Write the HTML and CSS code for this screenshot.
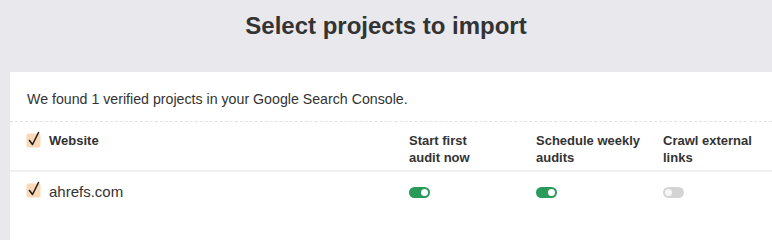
FILE: index.html
```html
<!DOCTYPE html>
<html>
<head>
<meta charset="utf-8">
<link rel="stylesheet" href="styles.css">
</head>
<body>
<header class="top">
  <h1 class="title">Select projects to import</h1>
</header>
<main class="card">
  <p class="intro">We found 1 verified projects in your Google Search Console.</p>
  <div class="row head">
    <div class="site">
      <span class="check"><svg viewBox="0 0 16 18" width="16" height="18"><rect x="0.5" y="3.5" width="14" height="14" rx="2" fill="#fbd8b6"/><path d="M3.5 10.5 L6.5 14.5 L12.5 2.5" fill="none" stroke="#222" stroke-width="1.6" stroke-linecap="round" stroke-linejoin="round"/></svg></span>
      <span class="label">Website</span>
    </div>
    <div class="col">Start first<br>audit now</div>
    <div class="col">Schedule weekly<br>audits</div>
    <div class="col">Crawl external<br>links</div>
  </div>
  <div class="row data">
    <div class="site">
      <span class="check"><svg viewBox="0 0 16 18" width="16" height="18"><rect x="0.5" y="3.5" width="14" height="14" rx="2" fill="#fbd8b6"/><path d="M3.5 10.5 L6.5 14.5 L12.5 2.5" fill="none" stroke="#222" stroke-width="1.6" stroke-linecap="round" stroke-linejoin="round"/></svg></span>
      <span class="domain">ahrefs.com</span>
    </div>
    <div class="col"><span class="toggle on"></span></div>
    <div class="col"><span class="toggle on"></span></div>
    <div class="col"><span class="toggle off"></span></div>
  </div>
</main>
</body>
</html>
```
FILE: styles.css
```css
html, body {
  margin: 0;
  padding: 0;
  background: #e9e8ed;
  font-family: "Liberation Sans", Arial, sans-serif;
  color: #333;
  overflow: hidden;
}
html { height: 100%; }
body {
  min-height: 100%;
  display: flex;
  flex-direction: column;
}
.top {
  height: 72px;
  flex: none;
  display: flex;
  justify-content: center;
}
.title {
  margin: 0;
  padding-top: 10px;
  font-size: 24px;
  line-height: 31px;
  font-weight: bold;
  color: #333;
}
.card {
  flex: 1;
  margin-left: 10px;
  background: #fff;
}
.intro {
  margin: 0;
  height: 50px;
  box-sizing: border-box;
  padding: 18px 0 0 17px;
  font-size: 14.2px;
  line-height: 18px;
  border-bottom: 1px dashed #e4e4e4;
}
.row {
  display: grid;
  grid-template-columns: 383px 127px 127px 127px;
  padding-left: 16px;
}
.head {
  height: 50px;
  box-sizing: border-box;
  padding-top: 10px;
  border-bottom: 2px solid #f0f0f0;
  font-size: 13px;
  line-height: 17px;
  font-weight: bold;
}
.site {
  display: flex;
  align-items: flex-start;
  gap: 7px;
}
.check {
  display: block;
  width: 16px;
  height: 18px;
  margin-top: -2px;
}
.check svg { display: block; }
.data {
  padding-top: 10px;
}
.domain {
  font-size: 15px;
  line-height: 18px;
  padding-top: 1px;
}
.data .col {
  padding-top: 5px;
}
.toggle {
  display: block;
  position: relative;
  width: 21px;
  height: 11px;
  border-radius: 6px;
}
.toggle::after {
  content: "";
  position: absolute;
  top: 2px;
  width: 7px;
  height: 7px;
  border-radius: 50%;
  background: #fff;
}
.toggle.on { background: #2a9a5b; }
.toggle.on::after { right: 2px; }
.toggle.off { background: #d4d4d4; }
.toggle.off::after { left: 2px; background: #f6f6f6; }
```
